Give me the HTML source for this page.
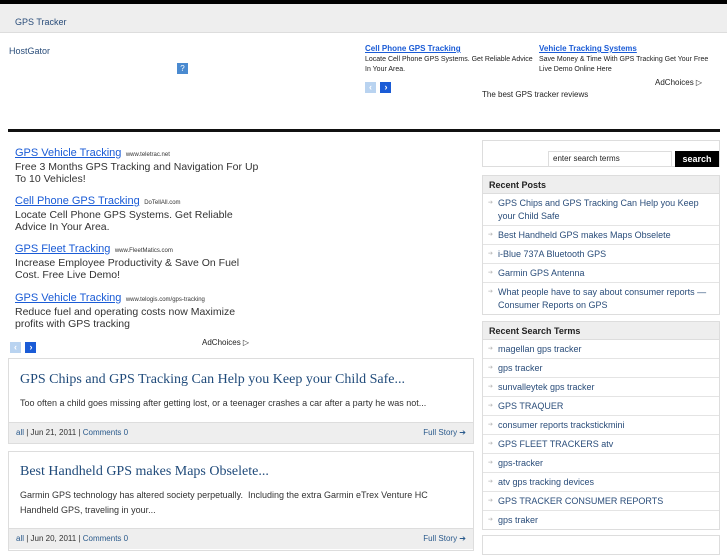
<!DOCTYPE html>
<html><head><meta charset="utf-8"><style>
*{margin:0;padding:0;box-sizing:border-box}
body{width:727px;height:545px;overflow:hidden;background:#fff;font-family:"Liberation Sans",sans-serif;position:relative}
.a{position:absolute}
.t{color:#1a5bd6;text-decoration:underline;font-size:11px}
.u{font-size:6px;color:#333}
.b{font-size:10.5px;color:#333;line-height:12px}
.sm{font-size:8px;color:#222}
.box{position:absolute;border:1px solid #ddd;background:#fff}
.post h2{font-family:"Liberation Serif",serif;font-weight:normal;font-size:14px;color:#1f4a7a;position:absolute;left:11px}
.post p{position:absolute;left:11px;width:440px;font-size:9px;color:#333;line-height:15px}
.foot{position:absolute;left:0;right:0;height:21px;background:#eee;border-top:1px solid #ddd;font-size:8px;color:#333;padding:5px 7px}
.foot a{color:#2a5a8c;text-decoration:none}
.side h3{background:#eee;font-size:9px;font-weight:bold;color:#222;height:18px;padding:4px 6px;border-bottom:1px solid #ddd}
.side li{list-style:none;font-size:9px;color:#2a4d7a;border-bottom:1px solid #e4e4e4;padding:3px 4px 2px 15px;line-height:13px;position:relative}
.side li:before{content:"➔";position:absolute;left:5px;color:#bbb;font-size:6px}
.side li:last-child{border-bottom:none}
.arr{display:inline-block;width:11px;height:11px;color:#fff;font-size:9px;text-align:center;line-height:11px;font-weight:bold}
</style></head><body>
<div class="a" style="left:0;top:0;width:727px;height:4px;background:#000"></div>
<div class="a" style="left:0;top:4px;width:727px;height:29px;background:#eee;border-bottom:1px solid #ddd"></div>
<div class="a" style="left:15px;top:17px;font-size:9px;color:#2a4d7a">GPS Tracker</div>
<div class="a" style="left:9px;top:46px;font-size:9px;color:#2a4d7a">HostGator</div>
<div class="a" style="left:177px;top:63px;width:11px;height:11px;background:#4a8ad0;color:#fff;font-size:8px;text-align:center;line-height:11px">?</div>
<div class="a" style="left:365px;top:44px;font-size:8px;font-weight:bold;color:#1a5bd6;text-decoration:underline">Cell Phone GPS Tracking</div>
<div class="a sm" style="left:365px;top:55px;width:170px;line-height:10px;font-size:7px">Locate Cell Phone GPS Systems. Get Reliable Advice In Your Area.</div>
<div class="a" style="left:539px;top:44px;font-size:8px;font-weight:bold;color:#1a5bd6;text-decoration:underline">Vehicle Tracking Systems</div>
<div class="a sm" style="left:539px;top:55px;width:180px;line-height:10px;font-size:7px">Save Money &amp; Time With GPS Tracking Get Your Free Live Demo Online Here</div>
<div class="a" style="left:365px;top:77px"><span class="arr" style="background:#b9d3f0">‹</span> <span class="arr" style="background:#1a5bd6">›</span></div>
<div class="a sm" style="left:655px;top:78px">AdChoices ▷</div>
<div class="a" style="left:482px;top:90px;font-size:8px;color:#222">The best GPS tracker reviews</div>
<div class="a" style="left:8px;top:129px;width:712px;height:3px;background:#111"></div>

<div class="a" style="left:15px;top:143px"><span class="t">GPS Vehicle Tracking</span> <span class="u">www.teletrac.net</span></div>
<div class="a b" style="left:15px;top:161px;width:245px">Free 3 Months GPS Tracking and Navigation For Up To 10 Vehicles!</div>
<div class="a" style="left:15px;top:191px"><span class="t">Cell Phone GPS Tracking</span> <span class="u">DoTellAll.com</span></div>
<div class="a b" style="left:15px;top:209px;width:245px">Locate Cell Phone GPS Systems. Get Reliable Advice In Your Area.</div>
<div class="a" style="left:15px;top:239px"><span class="t">GPS Fleet Tracking</span> <span class="u">www.FleetMatics.com</span></div>
<div class="a b" style="left:15px;top:257px;width:245px">Increase Employee Productivity &amp; Save On Fuel Cost. Free Live Demo!</div>
<div class="a" style="left:15px;top:288px"><span class="t">GPS Vehicle Tracking</span> <span class="u">www.telogis.com/gps-tracking</span></div>
<div class="a b" style="left:15px;top:306px;width:245px">Reduce fuel and operating costs now Maximize profits with GPS tracking</div>
<div class="a" style="left:10px;top:337px"><span class="arr" style="background:#b9d3f0">‹</span> <span class="arr" style="background:#1a5bd6">›</span></div>
<div class="a sm" style="left:202px;top:338px">AdChoices ▷</div>

<div class="box post" style="left:8px;top:358px;width:466px;height:86px">
<h2 style="top:13px">GPS Chips and GPS Tracking Can Help you Keep your Child Safe...</h2>
<p style="top:37px">Too often a child goes missing after getting lost, or a teenager crashes a car after a party he was not...</p>
<div class="foot" style="top:63px"><a>all</a> | Jun 21, 2011 | <a>Comments 0</a><a style="float:right">Full Story ➔</a></div>
</div>
<div class="box post" style="left:8px;top:451px;width:466px;height:100px">
<h2 style="top:12px">Best Handheld GPS makes Maps Obselete...</h2>
<p style="top:36px">Garmin GPS technology has altered society perpetually.&nbsp; Including the extra Garmin eTrex Venture HC Handheld GPS, traveling in your...</p>
<div class="foot" style="top:76px"><a>all</a> | Jun 20, 2011 | <a>Comments 0</a><a style="float:right">Full Story ➔</a></div>
</div>

<div class="box" style="left:482px;top:140px;width:238px;height:27px">
<div class="a" style="left:65px;top:10px;width:124px;height:16px;border:1px solid #ddd;font-size:8px;color:#222;padding:2px 4px">enter search terms</div>
<div class="a" style="left:192px;top:10px;width:44px;height:16px;background:#000;color:#fff;font-size:9px;font-weight:bold;text-align:center;line-height:16px">search</div>
</div>
<div class="box side" style="left:482px;top:175px;width:238px">
<h3>Recent Posts</h3>
<ul><li>GPS Chips and GPS Tracking Can Help you Keep your Child Safe</li><li>Best Handheld GPS makes Maps Obselete</li><li>i-Blue 737A Bluetooth GPS</li><li>Garmin GPS Antenna</li><li>What people have to say about consumer reports — Consumer Reports on GPS</li></ul>
</div>
<div class="box side" style="left:482px;top:321px;width:238px">
<h3>Recent Search Terms</h3>
<ul><li>magellan gps tracker</li><li>gps tracker</li><li>sunvalleytek gps tracker</li><li>GPS TRAQUER</li><li>consumer reports trackstickmini</li><li>GPS FLEET TRACKERS atv</li><li>gps-tracker</li><li>atv gps tracking devices</li><li>GPS TRACKER CONSUMER REPORTS</li><li>gps traker</li></ul>
</div>
<div class="box" style="left:482px;top:535px;width:238px;height:20px"></div>
</body></html>
